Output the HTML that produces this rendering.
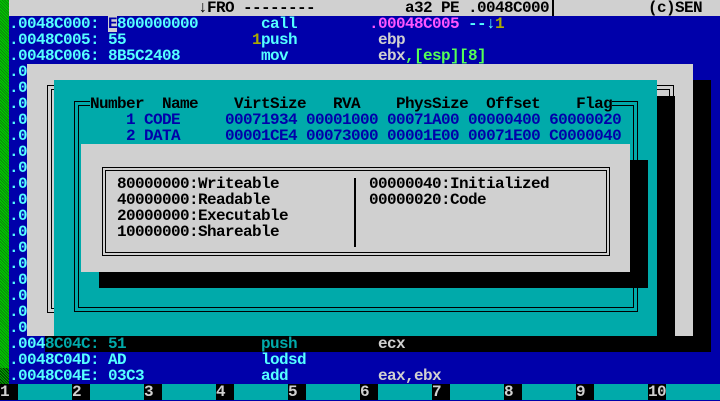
<!DOCTYPE html>
<html><head><meta charset="utf-8"><style>
*{margin:0;padding:0;box-sizing:border-box}
body{width:720px;height:400px;overflow:hidden;background:#0000aa;position:relative;font:bold 16px/16px "Liberation Mono",monospace}
.r{position:absolute}
.t{position:absolute;white-space:pre;height:16px;font:bold 16px/16px "Liberation Mono",monospace;letter-spacing:-0.6px}
.c{color:#55ffff}.g{color:#d0d0d0}.m{color:#ff55ff}.y{color:#aaaa00}.gr{color:#55ff55}.k{color:#000}.b{color:#0000aa}.tl{color:#00aaaa}
.f{position:absolute;border:1px solid #000}
</style></head><body>
<div class="r" style="left:0;top:0;width:720px;height:16px;background:#d0d0d0"></div>
<div class="r" style="left:0;top:0;width:9px;height:368px;background:repeating-linear-gradient(45deg,#00cc00 0 1px,#0a8a0a 1px 2px)"></div>
<div class="r" style="left:0;top:368px;width:9px;height:16px;background:repeating-linear-gradient(45deg,#00aa00 0 1px,#003300 1px 2px)"></div>
<div class="t k" style="left:198px;top:0">↓FRO --------</div>
<div class="t k" style="left:405px;top:0">a32 PE .0048C000</div>
<div class="r" style="left:552px;top:0;width:2px;height:16px;background:#000"></div>
<div class="t k" style="left:648px;top:0">(c)SEN</div>
<div class="t c" style="left:9px;top:16px">.0048C000: </div>
<div class="t b" style="left:108px;top:16px;background:#d0d0d0;width:9px">E</div>
<div class="t c" style="left:117px;top:16px">800000000</div>
<div class="t c" style="left:261px;top:16px">call</div>
<div class="t m" style="left:369px;top:16px">.00048C005</div>
<div class="t c" style="left:468px;top:16px">--↓</div>
<div class="t y" style="left:495px;top:16px">1</div>
<div class="t c" style="left:9px;top:32px">.0048C005: 55</div>
<div class="t y" style="left:252px;top:32px">1</div>
<div class="t c" style="left:261px;top:32px">push</div>
<div class="t g" style="left:378px;top:32px">ebp</div>
<div class="t c" style="left:9px;top:48px">.0048C006: 8B5C2408</div>
<div class="t c" style="left:261px;top:48px">mov</div>
<div class="t g" style="left:378px;top:48px">ebx</div>
<div class="t gr" style="left:405px;top:48px">,[esp][8]</div>
<div class="t c" style="left:9px;top:64px;height:auto">.0
.0
.0
.0
.0
.0
.0
.0
.0
.0
.0
.0
.0
.0
.0
.0
.0</div>
<div class="r" style="left:27px;top:64px;width:666px;height:272px;background:#d0d0d0"></div>
<div class="r" style="left:693px;top:80px;width:18px;height:272px;background:#000"></div>
<div class="f" style="left:47px;top:85px;width:627px;height:228px"></div>
<div class="f" style="left:51px;top:89px;width:619px;height:220px"></div>
<div class="r" style="left:54px;top:80px;width:603px;height:256px;background:#00aaaa"></div>
<div class="r" style="left:657px;top:96px;width:18px;height:240px;background:#000"></div>
<div class="f" style="left:74px;top:101px;width:564px;height:211px"></div>
<div class="f" style="left:78px;top:105px;width:556px;height:203px"></div>
<div class="t k" style="left:90px;top:96px;background:#00aaaa">Number  Name    VirtSize   RVA    PhysSize  Offset    Flag</div>
<div class="t b" style="left:126px;top:112px">1 CODE     00071934 00001000 00071A00 00000400 60000020</div>
<div class="t b" style="left:126px;top:128px">2 DATA     00001CE4 00073000 00001E00 00071E00 C0000040</div>
<div class="r" style="left:81px;top:144px;width:549px;height:128px;background:#d0d0d0"></div>
<div class="r" style="left:630px;top:160px;width:18px;height:128px;background:#000"></div>
<div class="r" style="left:99px;top:272px;width:531px;height:16px;background:#000"></div>
<div class="f" style="left:102px;top:167px;width:508px;height:89px"></div>
<div class="f" style="left:105px;top:170px;width:502px;height:83px"></div>
<div class="r" style="left:354px;top:178px;width:2px;height:69px;background:#000"></div>
<div class="t k" style="left:117px;top:176px;height:auto">80000000:Writeable
40000000:Readable
20000000:Executable
10000000:Shareable</div>
<div class="t k" style="left:369px;top:176px;height:auto">00000040:Initialized
00000020:Code</div>
<div class="r" style="left:45px;top:336px;width:666px;height:16px;background:#000"></div>
<div class="t c" style="left:9px;top:336px">.004</div>
<div class="t tl" style="left:45px;top:336px">8C04C: 51</div>
<div class="t tl" style="left:261px;top:336px">push</div>
<div class="t g" style="left:378px;top:336px">ecx</div>
<div class="t c" style="left:9px;top:352px">.0048C04D: AD</div>
<div class="t c" style="left:261px;top:352px">lodsd</div>
<div class="t c" style="left:9px;top:368px">.0048C04E: 03C3</div>
<div class="t c" style="left:261px;top:368px">add</div>
<div class="t g" style="left:378px;top:368px">eax,ebx</div>
<div class="r" style="left:0;top:384px;width:720px;height:16px;background:#00aaaa"></div>
<div class="t g" style="left:0;top:384px;width:18px;background:#000">1</div>
<div class="t g" style="left:72px;top:384px;width:18px;background:#000">2</div>
<div class="t g" style="left:144px;top:384px;width:18px;background:#000">3</div>
<div class="t g" style="left:216px;top:384px;width:18px;background:#000">4</div>
<div class="t g" style="left:288px;top:384px;width:18px;background:#000">5</div>
<div class="t g" style="left:360px;top:384px;width:18px;background:#000">6</div>
<div class="t g" style="left:432px;top:384px;width:18px;background:#000">7</div>
<div class="t g" style="left:504px;top:384px;width:18px;background:#000">8</div>
<div class="t g" style="left:576px;top:384px;width:18px;background:#000">9</div>
<div class="t g" style="left:648px;top:384px;width:18px;background:#000">10</div>
</body></html>
